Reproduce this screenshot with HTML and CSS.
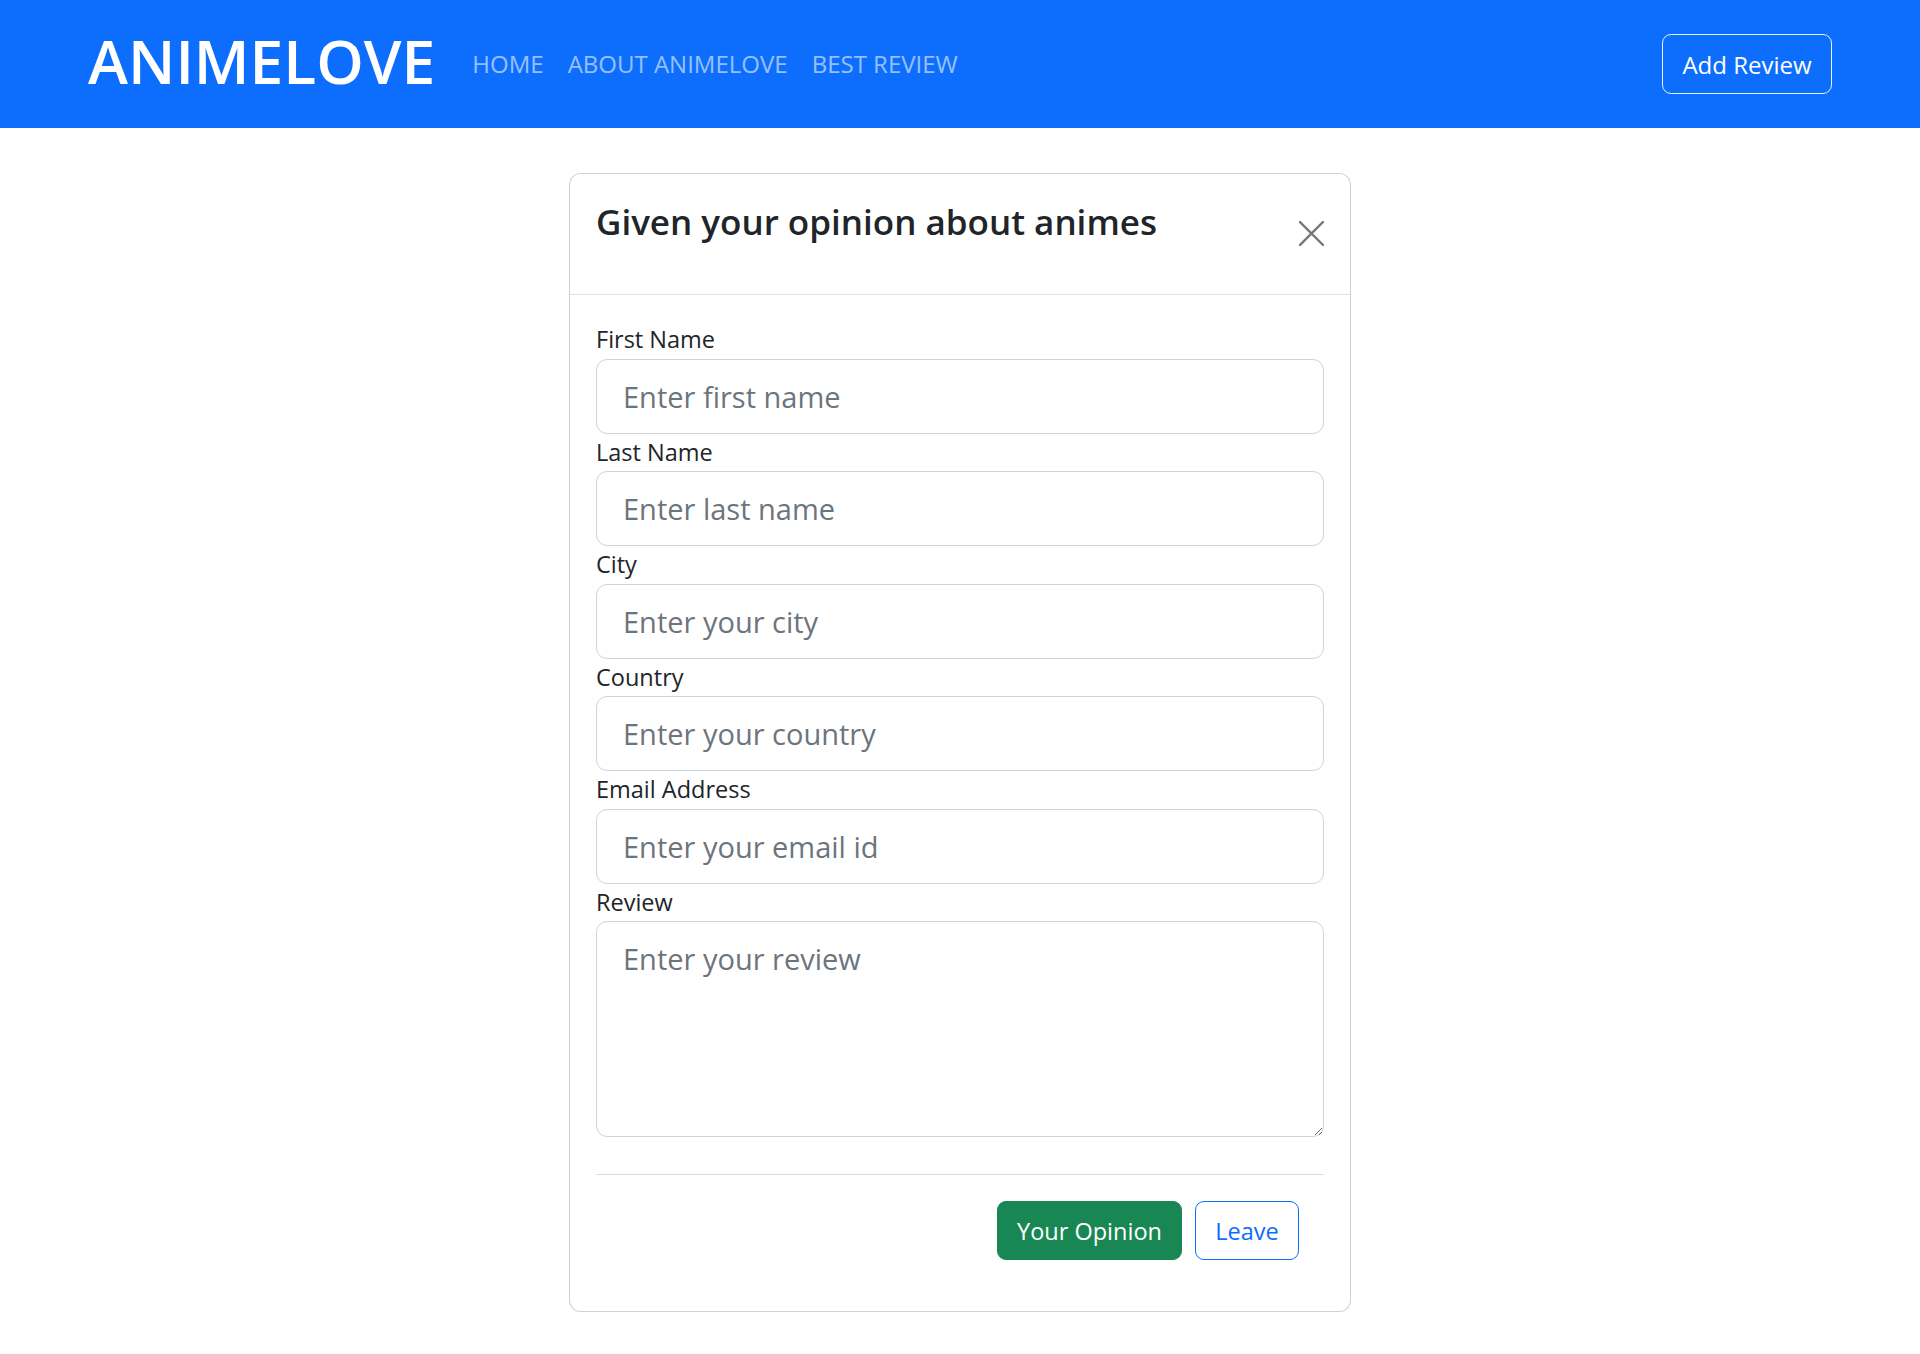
FILE: index.html
```html
<!DOCTYPE html>
<html lang="en">
<head>
<meta charset="utf-8">
<title>ANIMELOVE</title>
<link rel="stylesheet" href="styles.css">
</head>
<body>
<nav class="navbar">
  <a class="brand" href="#">ANIMELOVE</a>
  <ul class="nav-links">
    <li><a href="#">HOME</a></li>
    <li><a href="#">ABOUT ANIMELOVE</a></li>
    <li><a href="#">BEST REVIEW</a></li>
  </ul>
  <button class="btn-add" type="button">Add Review</button>
</nav>

<main class="page">
  <section class="card">
    <header class="card-header">
      <h4 class="card-title">Given your opinion about animes</h4>
      <button class="btn-close" type="button" aria-label="Close">
        <svg width="25" height="25" viewBox="0 0 25 25"><path d="M1 1L24 24M24 1L1 24" stroke="#777" stroke-width="2.4" fill="none" stroke-linecap="square"/></svg>
      </button>
    </header>
    <form class="card-body">
      <label class="form-label">First Name</label>
      <input class="form-control" type="text" placeholder="Enter first name">
      <label class="form-label">Last Name</label>
      <input class="form-control" type="text" placeholder="Enter last name">
      <label class="form-label">City</label>
      <input class="form-control" type="text" placeholder="Enter your city">
      <label class="form-label">Country</label>
      <input class="form-control" type="text" placeholder="Enter your country">
      <label class="form-label">Email Address</label>
      <input class="form-control" type="email" placeholder="Enter your email id">
      <label class="form-label">Review</label>
      <textarea class="form-control textarea" placeholder="Enter your review"></textarea>
      <hr class="divider">
      <div class="actions">
        <button class="btn btn-success" type="button">Your Opinion</button>
        <button class="btn btn-outline" type="button">Leave</button>
      </div>
    </form>
  </section>
</main>
</body>
</html>
```

FILE: styles.css
```css
* { box-sizing: border-box; }

html, body {
  margin: 0;
  padding: 0;
  background: #fff;
}

body {
  font-family: "Open Sans", "Noto Sans", sans-serif;
  color: #212529;
}

.navbar {
  height: 128px;
  background: #0d6efd;
  display: flex;
  align-items: center;
  padding: 0 88px 0 88px;
}

.brand {
  color: #fff;
  text-decoration: none;
  font-size: 60.5px;
  font-weight: 600;
  line-height: 1;
  margin-right: 25px;
  margin-top: -6px;
}

.nav-links {
  list-style: none;
  display: flex;
  margin: 0;
  padding: 0;
  flex: 1;
}

.nav-links a {
  display: block;
  padding: 0 12px;
  font-size: 24px;
  line-height: 36px;
  color: rgba(255, 255, 255, 0.58);
  text-decoration: none;
}

.btn-add {
  width: 170px;
  height: 60px;
  background: transparent;
  border: 1px solid rgba(255, 255, 255, 0.9);
  border-radius: 9px;
  color: #fff;
  font-family: inherit;
  font-size: 24px;
  padding: 0;
}

.page {
  padding-top: 45px;
}

.card {
  width: 782px;
  margin: 0 auto;
  border: 1px solid rgba(0, 0, 0, 0.18);
  border-radius: 12px;
  background: #fff;
}

.card-header {
  display: flex;
  justify-content: space-between;
  align-items: flex-start;
  height: 121px;
  padding: 26px 26px 0;
  border-bottom: 1px solid #dee2e6;
}

.card-title {
  margin: 0;
  font-size: 35px;
  line-height: 43px;
  font-weight: 600;
}

.btn-close {
  background: none;
  border: 0;
  padding: 0;
  margin-top: 21px;
  width: 25px;
  height: 25px;
  display: block;
}

.btn-close svg { display: block; }

.card-body {
  display: flex;
  flex-direction: column;
  padding: 26px 26px 51px;
  margin: 0;
}

.form-label {
  font-size: 23.5px;
  line-height: 37.5px;
}

.form-control {
  width: 100%;
  height: 75px;
  border: 1px solid #ced4da;
  border-radius: 11px;
  padding: 14px 26px;
  font-family: inherit;
  font-size: 29px;
  line-height: 45px;
  color: #212529;
  background: #fff;
}

.form-control::placeholder {
  color: #6c757d;
  opacity: 1;
}

.textarea {
  height: 216px;
  resize: vertical;
  display: block;
}

.divider {
  border: 0;
  border-top: 1px solid #dcdcdc;
  margin: 37px 0 26px;
  height: 0;
}

.actions {
  display: flex;
  justify-content: flex-end;
  gap: 13px;
  padding-right: 25px;
}

.btn {
  height: 59px;
  border-radius: 9px;
  font-family: inherit;
  font-size: 23.5px;
  padding: 0;
  cursor: pointer;
}

.btn-success {
  width: 185px;
  background: #198754;
  border: 1px solid #198754;
  color: #fff;
}

.btn-outline {
  width: 104px;
  background: #fff;
  border: 1px solid #0d6efd;
  color: #0d6efd;
}
```
